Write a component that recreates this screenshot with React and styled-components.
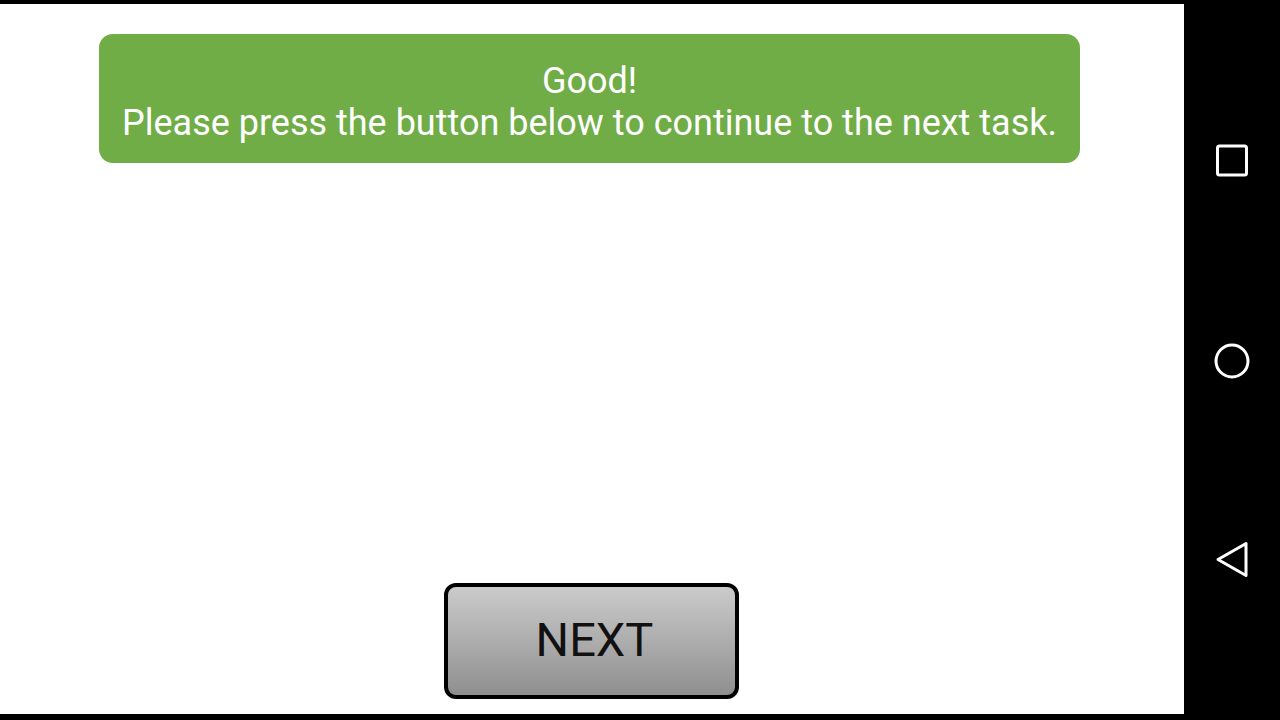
import React from 'react'
import styled, { createGlobalStyle } from 'styled-components'

const Global = createGlobalStyle`
  html, body {
    margin: 0;
    padding: 0;
    background: #000;
  }
  #root {
    width: 1280px;
    height: 720px;
  }
`

function App() {
  return (
    <>
      <Global />
      <Screen>
        <Content>
          <Banner>
            Good!
            <br />
            Please press the button below to continue to the next task.
          </Banner>
          <Spacer />
          <NextButton>NEXT</NextButton>
        </Content>
        <NavBar>
          <NavKey>
            <svg width="36" height="36" viewBox="0 0 36 36">
              <rect x="3.5" y="3" width="29" height="29" rx="2" fill="none" stroke="#fff" strokeWidth="3" />
            </svg>
          </NavKey>
          <NavKey>
            <svg width="40" height="40" viewBox="0 0 40 40">
              <circle cx="20" cy="20" r="16" fill="none" stroke="#fff" strokeWidth="3" />
            </svg>
          </NavKey>
          <NavKey>
            <svg width="40" height="40" viewBox="0 0 40 40">
              <path d="M34 3.5 L34 35.5 L6 19.5 Z" fill="none" stroke="#fff" strokeWidth="3" strokeLinejoin="round" />
            </svg>
          </NavKey>
        </NavBar>
      </Screen>
    </>
  )
}

const Screen = styled.div`
  width: 1280px;
  height: 720px;
  display: flex;
  background: #000;
`

const Content = styled.div`
  width: 1184px;
  height: 710px;
  margin-top: 4px;
  background: #fff;
  display: flex;
  flex-direction: column;
  align-items: center;
  box-sizing: border-box;
  padding: 30px 0 15px;
`

const Banner = styled.div`
  width: 981px;
  height: 129px;
  margin-right: 5px;
  box-sizing: border-box;
  background: #70ad47;
  border-radius: 14px;
  color: #fff;
  font-family: Roboto, "Noto Sans", sans-serif;
  font-size: 36px;
  line-height: 42px;
  text-align: center;
  padding-top: 26px;
`

const Spacer = styled.div`
  flex: 1;
`

const NextButton = styled.button`
  width: 295px;
  height: 116px;
  box-sizing: border-box;
  border: 4px solid #000;
  border-radius: 12px;
  background: linear-gradient(#cbcbcb, #8f8f8f);
  color: #111;
  font-family: Roboto, "Noto Sans", sans-serif;
  font-size: 47px;
  padding: 0 0 4px 6px;
  margin-right: 1px;
`

const NavBar = styled.div`
  width: 96px;
  display: flex;
  flex-direction: column;
  align-items: center;
  justify-content: space-between;
  padding: 141px 0 140px;
  box-sizing: border-box;
`

const NavKey = styled.div`
  width: 40px;
  height: 40px;
  display: flex;
  align-items: center;
  justify-content: center;
`

export default App
